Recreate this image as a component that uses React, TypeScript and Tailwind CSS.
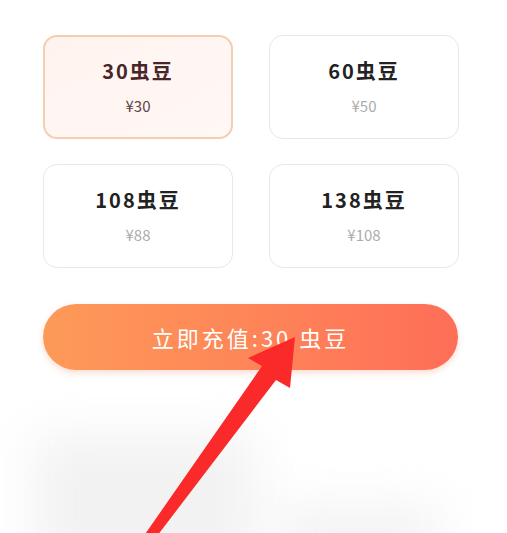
import { useState } from "react";

const packs = [
  { beans: 30, price: 30 },
  { beans: 60, price: 50 },
  { beans: 108, price: 88 },
  { beans: 138, price: 108 },
];

const font = { fontFamily: '"Noto Sans CJK SC", "Noto Sans", sans-serif' };

const App = () => {
  const [selected, setSelected] = useState(0);

  return (
    <div className="relative w-[507px] h-[533px] overflow-hidden bg-white" style={font}>
      <div className="ml-[43px] w-[416px] pt-[35px]">
        <div className="grid grid-cols-2 gap-x-[36px] gap-y-[25px]">
          {packs.map((p, i) => {
            const active = i === selected;
            return (
              <button
                key={p.beans}
                onClick={() => setSelected(i)}
                className={
                  active
                    ? "h-[104px] rounded-[14px] border-2 border-[#f4cdb3] bg-gradient-to-br from-[#fff3ef] to-[#fff8f5] flex flex-col items-center pt-[20px]"
                    : "h-[104px] rounded-[14px] border border-[#e8e8e8] bg-white flex flex-col items-center pt-[21px]"
                }
              >
                <span
                  className={
                    active
                      ? "text-[20px] font-semibold tracking-[2px] leading-[28px] text-[#4a2527]"
                      : "text-[20px] font-semibold tracking-[2px] leading-[28px] text-[#222222]"
                  }
                >
                  {p.beans}虫豆
                </span>
                <span
                  className={
                    active
                      ? "mt-[11px] text-[15px] leading-[20px] text-[#5a4446]"
                      : "mt-[11px] text-[15px] leading-[20px] text-[#ababab]"
                  }
                >
                  ¥{p.price}
                </span>
              </button>
            );
          })}
        </div>

        <button className="mt-[36px] w-[415px] h-[66px] rounded-full bg-gradient-to-r from-[#fd9a58] to-[#fe6e58] shadow-[0_3px_6px_rgba(240,120,80,0.25)] text-white text-[22px] tracking-[3px]">
          立即充值:{packs[selected].beans} 虫豆
        </button>
      </div>

      {/* blurred content below */}
      <div className="absolute left-[35px] top-[435px] w-[220px] h-[140px] bg-[#f2f2f2] blur-xl" />
      <div className="absolute left-[275px] top-[505px] w-[165px] h-[80px] bg-[#f3f3f3] blur-xl" />

      {/* annotation arrow */}
      <svg className="absolute inset-0 pointer-events-none" width="507" height="533" viewBox="0 0 507 533">
        <polygon
          points="295,337 290,388 276,380 154,540 141,540 262,366 248,358"
          fill="#fb2a2a"
        />
      </svg>
    </div>
  );
};

export default App;
